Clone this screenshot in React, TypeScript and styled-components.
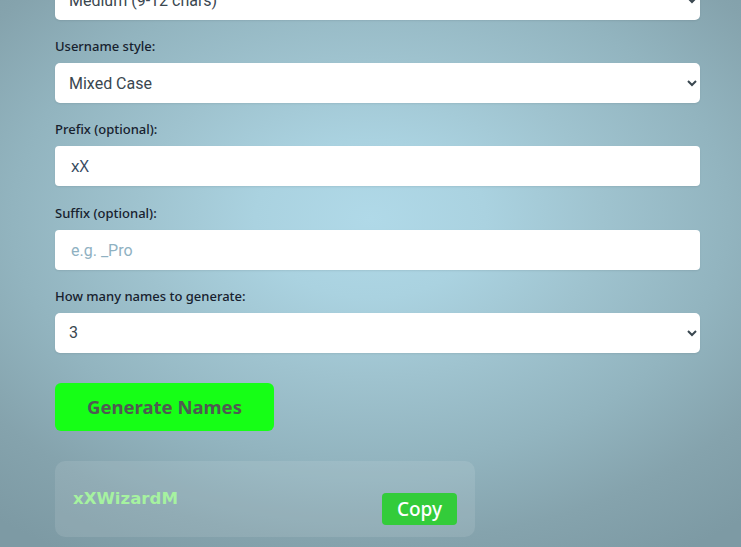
import React, { useState } from 'react';
import styled, { createGlobalStyle } from 'styled-components';

const GlobalStyle = createGlobalStyle`
html, body {
    margin: 0;
    height: 100%;
    overflow: hidden;
}
body {
    font-family: "Noto Sans", "Open Sans", sans-serif;
    background: radial-gradient(ellipse 78% 72% at 50% 40%, #b0d9e8 0%, #aad2e0 20%, #9fc3cf 40%, #92b4bf 62%, #85a3ad 82%, #7d9aa4 100%);
}
`;

const Page = styled.div`
padding: 0 41px 0 55px;
margin-top: -20px;
`;

const Field = styled.div`
margin-bottom: 18.2px;
`;

const Label = styled.label`
display: block;
font-size: 13px;
line-height: 17px;
font-weight: 500;
color: #17212e;
margin-bottom: 8px;
`;

const Select = styled.select`
width: 100%;
height: 40px;
border: none;
border-radius: 5px;
background: #ffffff;
padding: 0 10px 0 10px;
font-family: Roboto, sans-serif;
font-size: 16px;
color: #3a4750;
box-shadow: 0 1px 2px rgba(0, 0, 0, 0.08);
`;

const TextInput = styled.input`
box-sizing: border-box;
width: 100%;
height: 40px;
border: none;
border-radius: 4px;
background: #ffffff;
padding: 0 16px;
font-family: "Noto Sans", sans-serif;
font-size: 16px;
color: #34495e;
box-shadow: 0 1px 2px rgba(0, 0, 0, 0.08);
&::placeholder {
    font-family: Roboto, sans-serif;
    color: #8fb1c2;
}
`;

const GenerateButton = styled.button`
margin-top: 12px;
width: 219px;
height: 48px;
border: none;
border-radius: 6px;
background: #16ff16;
color: #4f5a52;
font-family: "Noto Sans", sans-serif;
font-weight: 700;
font-size: 18.5px;
cursor: pointer;
`;

const ResultCard = styled.div`
margin-top: 30px;
width: 420px;
height: 76px;
box-sizing: border-box;
padding: 0 18px;
border-radius: 10px;
background: rgba(255, 255, 255, 0.1);
display: flex;
align-items: center;
justify-content: space-between;
`;

const Name = styled.span`
font-family: "DejaVu Sans", sans-serif;
font-weight: 700;
font-size: 16.6px;
color: #a6f2a0;
`;

const CopyButton = styled.button`
margin-top: 20px;
width: 75px;
height: 32px;
border: none;
border-radius: 4px;
background: #33cc3a;
color: #ffffff;
font-family: "Noto Sans", sans-serif;
font-size: 19px;
font-weight: 500;
cursor: pointer;
`;

const App = () => {
    const [prefix, setPrefix] = useState('xX');
    const [suffix, setSuffix] = useState('');

    return (
        <>
            <GlobalStyle />
            <Page>
                <Field>
                    <Select defaultValue="medium">
                        <option value="medium">Medium (9-12 chars)</option>
                    </Select>
                </Field>
                <Field>
                    <Label>Username style:</Label>
                    <Select defaultValue="mixed">
                        <option value="mixed">Mixed Case</option>
                    </Select>
                </Field>
                <Field>
                    <Label>Prefix (optional):</Label>
                    <TextInput value={prefix} onChange={e => setPrefix(e.target.value)} />
                </Field>
                <Field>
                    <Label>Suffix (optional):</Label>
                    <TextInput placeholder="e.g. _Pro" value={suffix} onChange={e => setSuffix(e.target.value)} />
                </Field>
                <Field>
                    <Label>How many names to generate:</Label>
                    <Select defaultValue="3">
                        <option value="3">3</option>
                    </Select>
                </Field>
                <GenerateButton>Generate Names</GenerateButton>
                <ResultCard>
                    <Name>xXWizardM</Name>
                    <CopyButton>Copy</CopyButton>
                </ResultCard>
            </Page>
        </>
    );
}

export default App;
